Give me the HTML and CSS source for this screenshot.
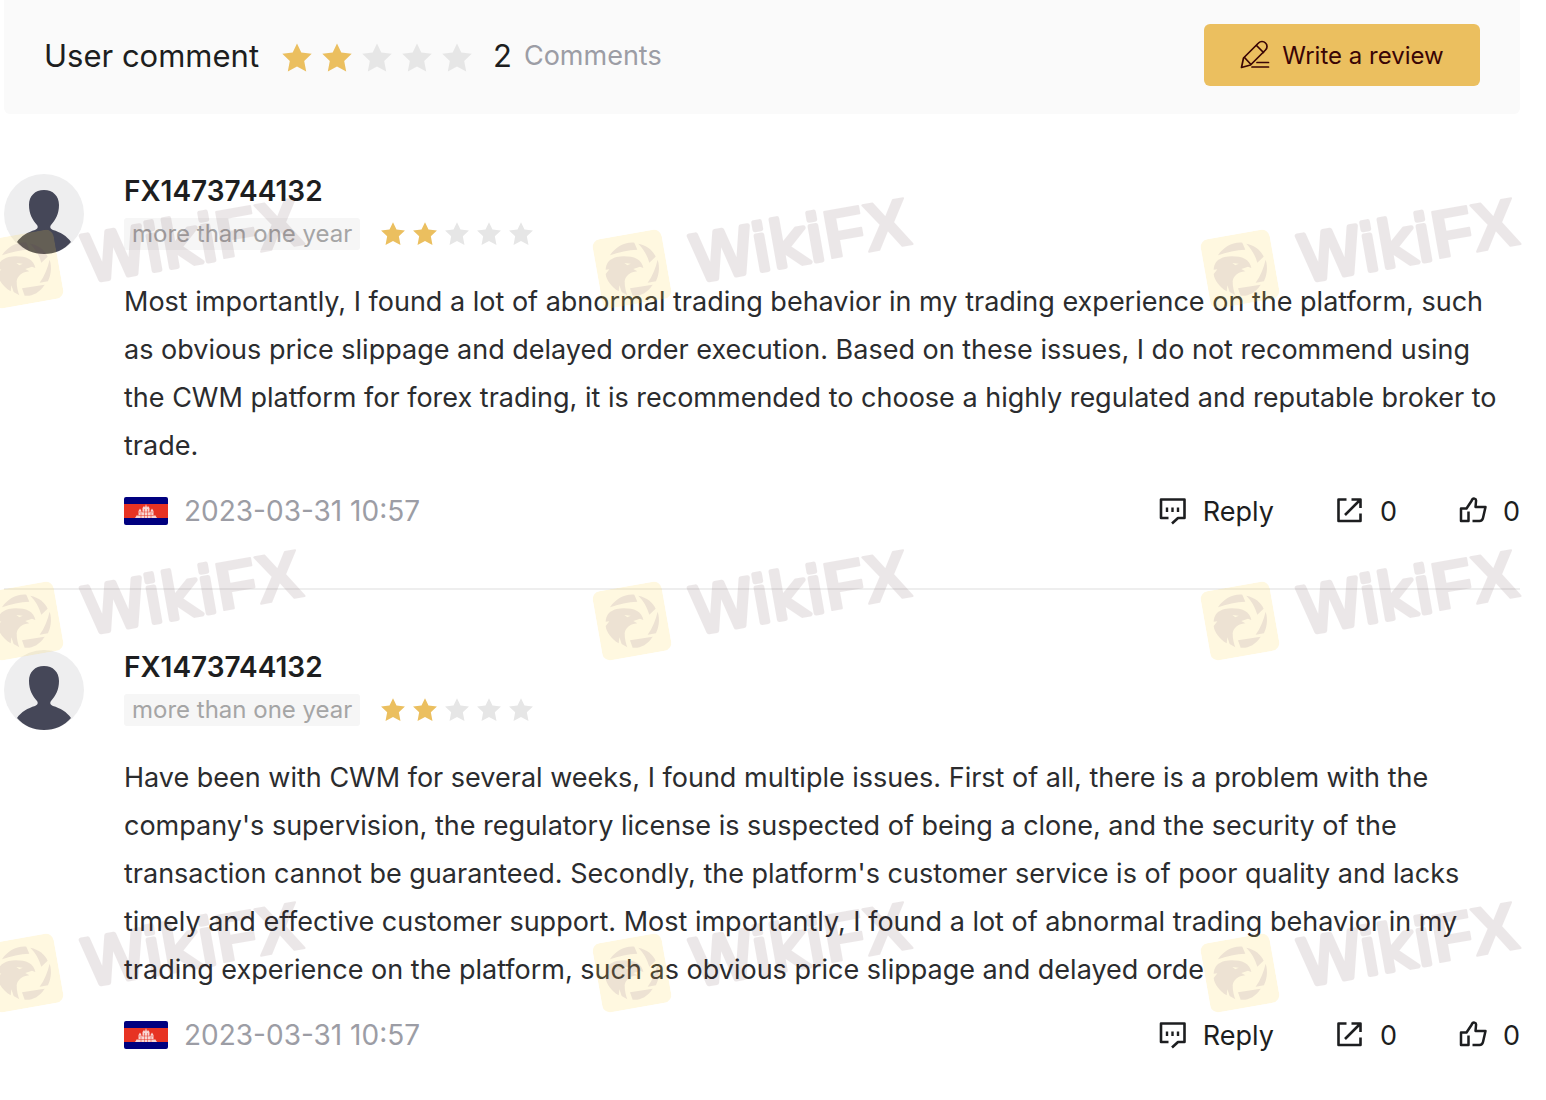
FILE: index.html
```html
<!DOCTYPE html>
<html lang="en">
<head>
    <meta charset="UTF-8">
    <meta name="viewport" content="width=device-width, initial-scale=1.0">
    <title>User comment</title>
    <link rel="stylesheet" href="styles.css">
</head>
<body>
    <!-- shared icons -->
    <svg class="sprite" aria-hidden="true">
        <symbol id="star" viewBox="0 0 32 32">
            <path d="M16 1.500l4.300 9 10.400 1.200-7.500 7.200 2 10.500-9.200-4.800-9.200 4.800 2-10.500-7.500-7.200 10.400-1.200z"/>
        </symbol>
        <symbol id="pen" viewBox="0 0 30 30">
            <g fill="none" stroke="currentColor" stroke-width="1.700" stroke-linecap="round" stroke-linejoin="round">
                <path d="M1.500 27.500l2-9.500L18.500 3a4.800 4.800 0 0 1 7 0 4.800 4.800 0 0 1 0 7L10.500 25z"/>
                <path d="M16.500 5.500l7 7M4.500 17.500l6 6.500M17 22.500h11.500M12 27h16.500"/>
            </g>
        </symbol>
        <symbol id="avatar" viewBox="0 0 80 80">
            <circle cx="40" cy="40" r="40" fill="#eeeeef"/>
            <path fill="#454758" d="M40 16c-9 0-15 6-15 15 0 9 3.500 15 8 20 1.500 2 .5 4-2 5-7 2-14 6-18 12 7 8 16 12 27 12s20-4 27-12c-4-6-11-10-18-12-2.500-1-3.500-3-2-5 4.500-5 8-11 8-20 0-9-6-15-15-15z"/>
        </symbol>
        <symbol id="flag" viewBox="0 0 44 28">
            <rect width="44" height="28" rx="2" fill="#00007f"/>
            <rect y="7" width="44" height="14" fill="#e73323"/>
            <path fill="#f8d5d2" d="M11 21l2-3h1.500V14l1.500-2.500 1.500 2.500v1h1V11l1.500-2 1 1.500L22 7l1 3.500L24 9l1.500 2v4h1v-1l1.500-2.500 1.500 2.500v4H31l2 3z"/>
            <path stroke="#e73323" stroke-width=".5" d="M13 18.500h18M15 15h14M17 16v5M20.500 12v9M23.500 12v9M27 16v5"/>
        </symbol>
        <symbol id="reply" viewBox="0 0 28 28">
            <path fill="none" stroke="currentColor" stroke-width="2.600" stroke-linejoin="round" d="M9.500 21H2V2.500h23.500V21h-6.500l-6 5.500"/>
            <path stroke="currentColor" stroke-width="2.400" d="M8 10.500v4.500M13.500 10.500v4.500M19 10.500v4.500"/>
        </symbol>
        <symbol id="share" viewBox="0 0 28 28">
            <path fill="none" stroke="currentColor" stroke-width="2.600" stroke-linejoin="round" d="M10.500 2.500H2.500v21.500h22v-7.500M15.500 2.500h9v8.500M24.500 2.500L9 18"/>
        </symbol>
        <symbol id="like" viewBox="0 0 28 28">
            <path fill="none" stroke="currentColor" stroke-width="2.500" stroke-linejoin="round" d="M9.500 14.500V24H2V11.500h5.500L12.500 4c1.500-4 5-2.500 4.500.5L16.500 10h10l-2.500 11c-.5 2-1.200 3-3.500 3h-7"/>
        </symbol>
        <symbol id="eagle" viewBox="0 0 70 70">
            <rect width="70" height="70" rx="8" fill="#ffd84a" fill-opacity=".17"/>
            <g fill="#4a2c60" fill-opacity=".1" transform="translate(35 35) rotate(10) scale(.333) translate(-126 -243)">
                <path d="M60 202C75 178 105 161 133 164L142 185C115 186 85 192 60 202z"/>
                <path d="M145 167C170 172 190 188 197 206L178 224C172 202 160 182 145 167z"/>
                <path d="M203 215C211 240 206 262 198 280L173 284C187 265 197 240 203 215z"/>
                <path d="M120 301L188 290C172 315 150 325 128 323z"/>
                <path fill-rule="evenodd" d="M47 245C48 225 58 213 80 207C100 203 125 205 140 212C152 218 158 228 160 240L150 236L130 243L142 250C120 252 106 264 104 280C104 298 108 312 112 322L95 312L88 292L86 310C65 298 48 275 47 258L58 244zM103 225L122 227L112 232z"/>
            </g>
        </symbol>
    </svg>

    <div class="comments">
        <header class="comments-header">
            <h1>User comment</h1>
            <div class="stars stars-large" role="img" aria-label="2 of 5 stars">
                <svg class="on"><use href="#star"/></svg>
                <svg class="on"><use href="#star"/></svg>
                <svg><use href="#star"/></svg>
                <svg><use href="#star"/></svg>
                <svg><use href="#star"/></svg>
            </div>
            <span class="count">2</span>
            <span class="count-label">Comments</span>
            <button type="button" class="write-btn">
                <svg><use href="#pen"/></svg>
                Write a review
            </button>
        </header>

        <article class="comment">
            <svg class="avatar"><use href="#avatar"/></svg>
            <div class="comment-body">
                <h2>FX1473744132</h2>
                <div class="meta">
                    <span class="tag">more than one year</span>
                    <div class="stars" role="img" aria-label="2 of 5 stars">
                        <svg class="on"><use href="#star"/></svg>
                        <svg class="on"><use href="#star"/></svg>
                        <svg><use href="#star"/></svg>
                        <svg><use href="#star"/></svg>
                        <svg><use href="#star"/></svg>
                    </div>
                </div>
                <p>Most importantly, I found a lot of abnormal trading behavior in my trading experience on the platform, such as obvious price slippage and delayed order execution. Based on these issues, I do not recommend using the CWM platform for forex trading, it is recommended to choose a highly regulated and reputable broker to trade.</p>
                <footer>
                    <svg class="flag"><use href="#flag"/></svg>
                    <time datetime="2023-03-31T10:57">2023-03-31 10:57</time>
                    <div class="actions">
                        <button type="button"><svg><use href="#reply"/></svg>Reply</button>
                        <button type="button" aria-label="Share"><svg><use href="#share"/></svg>0</button>
                        <button type="button" aria-label="Like"><svg><use href="#like"/></svg>0</button>
                    </div>
                </footer>
            </div>
        </article>

        <article class="comment">
            <svg class="avatar"><use href="#avatar"/></svg>
            <div class="comment-body">
                <h2>FX1473744132</h2>
                <div class="meta">
                    <span class="tag">more than one year</span>
                    <div class="stars" role="img" aria-label="2 of 5 stars">
                        <svg class="on"><use href="#star"/></svg>
                        <svg class="on"><use href="#star"/></svg>
                        <svg><use href="#star"/></svg>
                        <svg><use href="#star"/></svg>
                        <svg><use href="#star"/></svg>
                    </div>
                </div>
                <p>Have been with CWM for several weeks, I found multiple issues. First of all, there is a problem with the company's supervision, the regulatory license is suspected of being a clone, and the security of the transaction cannot be guaranteed. Secondly, the platform's customer service is of poor quality and lacks timely and effective customer support. Most importantly, I found a lot of abnormal trading behavior in my trading experience on the platform, such as obvious price slippage and delayed orde</p>
                <footer>
                    <svg class="flag"><use href="#flag"/></svg>
                    <time datetime="2023-03-31T10:57">2023-03-31 10:57</time>
                    <div class="actions">
                        <button type="button"><svg><use href="#reply"/></svg>Reply</button>
                        <button type="button" aria-label="Share"><svg><use href="#share"/></svg>0</button>
                        <button type="button" aria-label="Like"><svg><use href="#like"/></svg>0</button>
                    </div>
                </footer>
            </div>
        </article>
    </div>

    <!-- watermark over the whole page -->
    <div class="watermark" aria-hidden="true">
        <svg><use href="#eagle" width="70" height="70"/><text x="95" y="59">Wiki<tspan>FX</tspan></text></svg>
        <svg><use href="#eagle" width="70" height="70"/><text x="95" y="59">Wiki<tspan>FX</tspan></text></svg>
        <svg><use href="#eagle" width="70" height="70"/><text x="95" y="59">Wiki<tspan>FX</tspan></text></svg>
        <svg><use href="#eagle" width="70" height="70"/><text x="95" y="59">Wiki<tspan>FX</tspan></text></svg>
        <svg><use href="#eagle" width="70" height="70"/><text x="95" y="59">Wiki<tspan>FX</tspan></text></svg>
        <svg><use href="#eagle" width="70" height="70"/><text x="95" y="59">Wiki<tspan>FX</tspan></text></svg>
        <svg><use href="#eagle" width="70" height="70"/><text x="95" y="59">Wiki<tspan>FX</tspan></text></svg>
        <svg><use href="#eagle" width="70" height="70"/><text x="95" y="59">Wiki<tspan>FX</tspan></text></svg>
        <svg><use href="#eagle" width="70" height="70"/><text x="95" y="59">Wiki<tspan>FX</tspan></text></svg>
    </div>
</body>
</html>
```
FILE: styles.css
```css
* {
    box-sizing: border-box;
}
body {
    position: relative;
    margin: 0;
    background: #fff;
    color: #1d1e20;
    font-family: Inter, "Liberation Sans", sans-serif;
    font-size: 27px;
}
h1, h2, p {
    margin: 0;
}
button {
    border: none;
    background: none;
    padding: 0;
    color: inherit;
    font: inherit;
    cursor: pointer;
}
.sprite {
    position: absolute;
    width: 0;
    height: 0;
}
.comments {
    padding: 0 26px 0 4px;
}
.comments-header {
    display: flex;
    align-items: center;
    padding: 24px 40px 28px;
    background: #fafafa;
    border-radius: 0 0 6px 6px;
}
.comments-header h1 {
    font-size: 31px;
    font-weight: 400;
}
.stars {
    display: flex;
    gap: 6px;
    fill: #e6e6e6;
}
.stars svg {
    width: 26px;
    height: 26px;
}
.stars .on {
    fill: #ebbf5f;
}
.stars-large {
    gap: 8px;
    margin: 6px 20px 0 22px;
}
.stars-large svg {
    width: 32px;
    height: 32px;
}
.count {
    font-size: 31px;
}
.count-label {
    margin-left: 12px;
    color: #9c9da5;
}
.write-btn {
    display: flex;
    align-items: center;
    justify-content: center;
    gap: 12px;
    width: 276px;
    height: 62px;
    margin-left: auto;
    border-radius: 6px;
    background: #ebbf5f;
    color: #3a0505;
    font-size: 24px;
}
.write-btn svg {
    width: 30px;
    height: 30px;
}
.comment {
    display: flex;
    gap: 40px;
    padding: 60px 0;
    border-bottom: 2px solid #eee;
}
.comment:last-child {
    padding-bottom: 40px;
    border-bottom: none;
}
.avatar {
    flex: none;
    width: 80px;
    height: 80px;
}
.comment-body {
    flex: 1;
}
.comment h2 {
    font-size: 28px;
    font-weight: 600;
    line-height: 34px;
}
.meta {
    display: flex;
    align-items: center;
    gap: 20px;
    margin: 10px 0 28px;
}
.tag {
    padding: 0 8px;
    border-radius: 3px;
    background: #f6f6f6;
    color: #a5a5a5;
    font-size: 24px;
    line-height: 32px;
}
.comment p {
    padding-right: 8px;
    color: #2b2c2e;
    line-height: 48px;
}
.comment footer {
    display: flex;
    align-items: center;
    height: 34px;
    margin-top: 24px;
}
.flag {
    width: 44px;
    height: 28px;
    margin-right: 16px;
}
time {
    color: #9c9da5;
    font-size: 28px;
}
.actions {
    display: flex;
    gap: 62px;
    margin-left: auto;
}
.actions button {
    display: flex;
    align-items: center;
    gap: 16px;
}
.actions svg {
    width: 28px;
    height: 28px;
}
.watermark {
    position: absolute;
    inset: 0;
    display: grid;
    grid-template-columns: repeat(3, 608px);
    grid-auto-rows: 352px;
    padding-top: 234px;
    margin-left: -11px;
    overflow: hidden;
    pointer-events: none;
}
.watermark svg {
    width: 330px;
    height: 70px;
    overflow: visible;
    transform: rotate(-10deg);
    transform-origin: 35px 35px;
}
.watermark text {
    font: 400 64px "DejaVu Sans", sans-serif;
    fill: #4a1e28;
    stroke: #4a1e28;
    stroke-width: 5px;
    stroke-linejoin: round;
    opacity: .1;
}
.watermark tspan {
    font: 700 68px "Liberation Sans", sans-serif;
    stroke-width: 2px;
}
```
